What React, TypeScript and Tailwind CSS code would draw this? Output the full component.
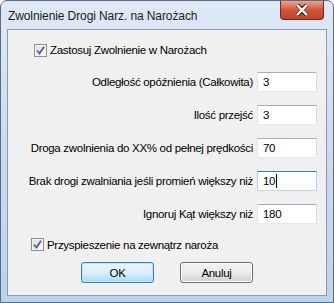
import React from "react";

const Check = ({ checked }: { checked: boolean }) => (
  <span className="w-[13px] h-[13px] shrink-0 border border-[#8e8f8f] bg-gradient-to-br from-[#dcdcdc] to-[#fbfbfb] flex items-center justify-center">
    <span className="w-[11px] h-[11px] border border-[#f4f4f4] bg-gradient-to-br from-[#e2e2e2] to-[#f6f6f6] flex items-center justify-center">
      {checked && (
        <svg width="9" height="9" viewBox="0 0 9 9">
          <path d="M1 4.5 L3.5 7.5 L8 0.8" fill="none" stroke="#4b61a0" strokeWidth="1.8" />
        </svg>
      )}
    </span>
  </span>
);

type RowProps = { label: string; value: string; focused?: boolean };

const Row = ({ label, value, focused }: RowProps) => (
  <div className="flex items-center justify-end gap-[4px] h-[20px] pr-[9px]">
    <span className="whitespace-nowrap">{label}</span>
    <div
      className={
        focused
          ? "w-[60px] h-[20px] border border-[#3d7bad] border-b-[#b7d9ed] border-l-[#b5cfe7] border-r-[#b5cfe7] bg-white flex items-center pl-[5px]"
          : "w-[60px] h-[20px] border border-[#abadb3] border-b-[#e3e9ef] border-l-[#e2e3ea] border-r-[#dbdfe6] bg-white flex items-center pl-[5px]"
      }
    >
      <span>{value}</span>
      {focused && <span className="w-px h-[14px] bg-black ml-px" />}
    </div>
  </div>
);

export default function App() {
  return (
    <div
      className="w-[334px] h-[303px] rounded-t-[7px] border border-[#5a6b80] bg-gradient-to-b from-[#dfe9f6] via-[#c9dbf0] to-[#bcd2ee] flex flex-col text-[11.5px] tracking-[-0.3px] leading-[14px] text-black"
      style={{ fontFamily: '"Liberation Sans", Arial, sans-serif' }}
    >
      <div className="h-[28px] flex items-start pl-[7px] pr-[9px]">
        <span className="mt-[8px] text-[12px] tracking-[-0.1px] text-[#1b1b1b] flex-1">Zwolnienie Drogi Narz. na Narożach</span>
        <div className="w-[44px] h-[19px] rounded-b-[4px] border border-[#7a2a1d] border-t-0 bg-gradient-to-b from-[#e8a293] via-[#d0533c] to-[#c0402b] flex items-center justify-center">
          <svg width="16" height="12" viewBox="0 0 16 12">
            <path d="M3 1 L8 5 L13 1 M3 11 L8 7 L13 11" fill="none" stroke="#4a1a12" strokeWidth="4" strokeLinejoin="round" />
            <path d="M3 1 L13 11 M13 1 L3 11" fill="none" stroke="#ffffff" strokeWidth="2.4" />
          </svg>
        </div>
      </div>
      <div className="mx-[6px] h-[267px] border border-[#8b9aae] bg-[#f0f0f0] flex flex-col">
        <div className="flex items-center gap-[3px] ml-[26px] mt-[13px] h-[14px]">
          <Check checked />
          <span>Zastosuj Zwolnienie w Narożach</span>
        </div>
        <div className="flex flex-col gap-[13px] mt-[15px]">
          <Row label="Odległość opóźnienia (Całkowita)" value="3" />
          <Row label="Ilość przejść" value="3" />
          <Row label="Droga zwolnienia do XX% od pełnej prędkości" value="70" />
          <Row label="Brak drogi zwalniania jeśli promień większy niż" value="10" focused />
          <Row label="Ignoruj Kąt większy niż" value="180" />
        </div>
        <div className="flex items-center gap-[3px] ml-[23px] mt-[14px] h-[13px]">
          <Check checked />
          <span>Przyspieszenie na zewnątrz naroża</span>
        </div>
        <div className="flex gap-[26px] ml-[73px] mt-[11px]">
          <button className="w-[73px] h-[21px] rounded-[3px] border border-[#3c7fb1] bg-gradient-to-b from-[#eaf6fd] via-[#d9f0fc] to-[#a7d9f5] shadow-[inset_0_0_0_1px_#bfe4f8]">
            OK
          </button>
          <button className="w-[73px] h-[21px] rounded-[3px] border border-[#707070] bg-gradient-to-b from-[#f2f2f2] via-[#ebebeb] to-[#cfcfcf] shadow-[inset_0_0_0_1px_#fcfcfc]">
            Anuluj
          </button>
        </div>
      </div>
    </div>
  );
}
